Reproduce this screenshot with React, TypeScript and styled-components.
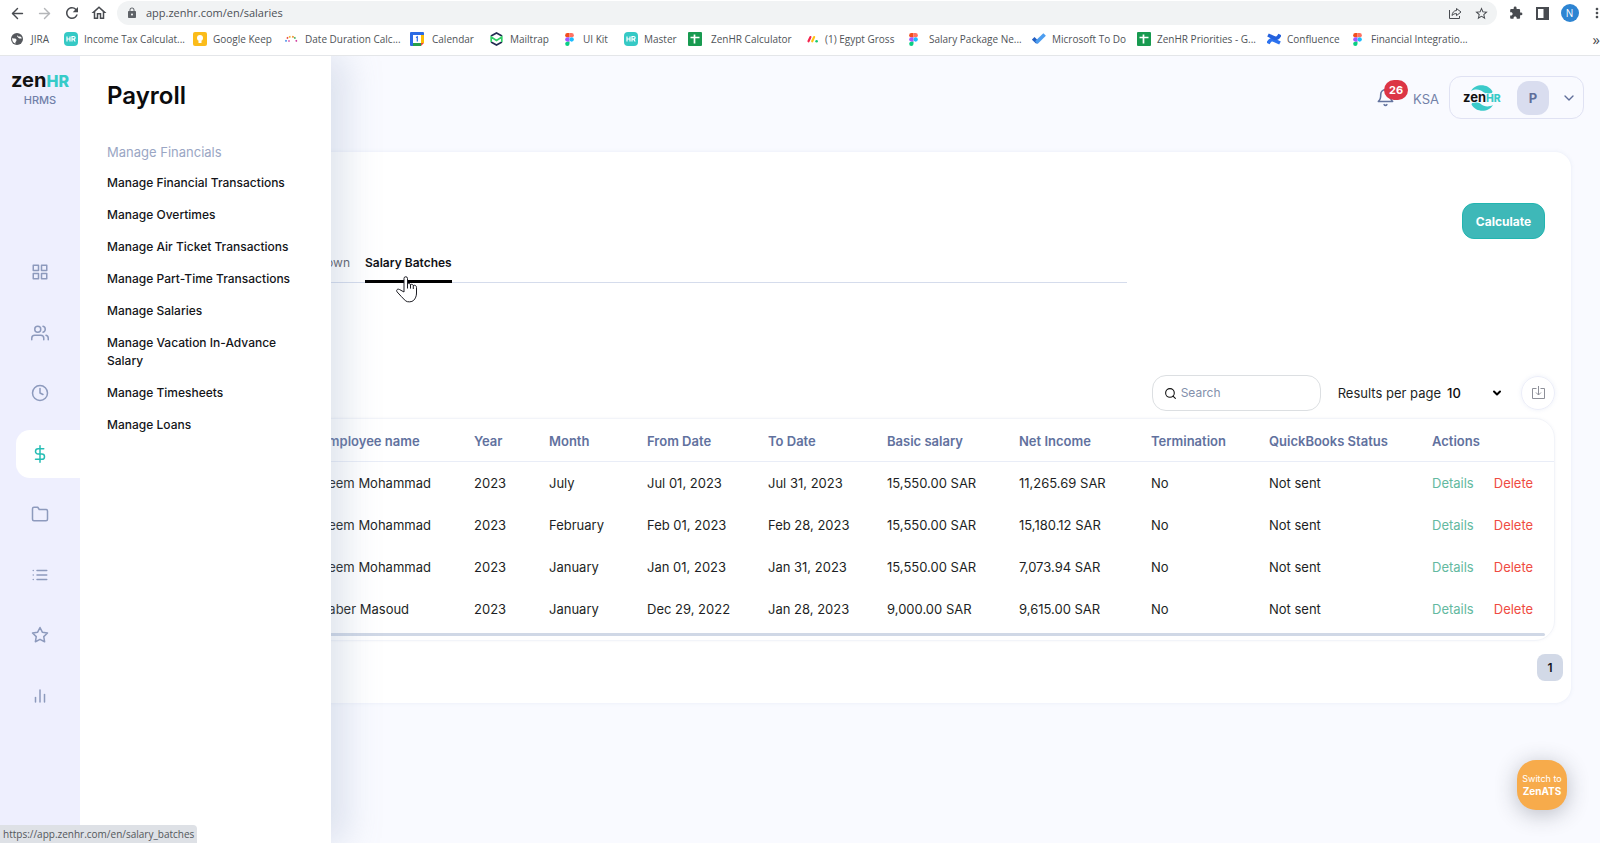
import React from "react";
import styled, { createGlobalStyle } from "styled-components";
import {
  FiArrowLeft, FiArrowRight, FiBarChart2, FiBell, FiChevronDown, FiClock,
  FiDollarSign, FiFolder, FiGrid, FiList, FiSearch, FiStar, FiUsers,
} from "react-icons/fi";
import {
  MdExtension, MdLock, MdMoreVert, MdRefresh, MdOutlineHome, MdStarBorder,
} from "react-icons/md";

const GlobalStyle = createGlobalStyle`
  * { box-sizing: border-box; }
  body {
    margin: 0;
    background: #f9faff;
    color: #1d1f24;
    font-family: Inter, "Liberation Sans", sans-serif;
    font-size: 13px;
  }
  button, input, select { font-family: inherit; }
  button { cursor: pointer; padding: 0; border: 0; background: none; }
  a { text-decoration: none; color: inherit; }
  svg { display: block; flex: none; }
`;

const Screen = styled.div`
  position: relative;
  display: flex;
  flex-direction: column;
  min-height: 100vh;
  overflow: hidden;
`;

/* ---------- browser chrome ---------- */

const Browser = styled.header`
  background: #fff;
  border-bottom: 1px solid #e4e6e9;
  color: #4f5358;
  font-family: "Open Sans", "Noto Sans", sans-serif;
`;

const AddressRow = styled.div`
  display: flex;
  align-items: center;
  height: 26px;
  margin-right: -10px;
  padding-left: 4px;
`;

const ChromeButton = styled.button<{ $muted?: boolean }>`
  display: grid;
  place-items: center;
  width: 27px;
  height: 24px;
  flex: none;
  color: ${(p) => (p.$muted ? "#b4b6b9" : "#484b50")};
  font-size: 18px;
`;

const AddressBar = styled.div`
  display: flex;
  align-items: center;
  flex: 1;
  height: 24px;
  margin: 0 5px;
  padding: 0 2px 0 9px;
  border-radius: 12px;
  background: #f1f3f4;
`;

const AddressInput = styled.input`
  flex: 1;
  min-width: 0;
  border: 0;
  padding: 0 0 1px 8px;
  background: none;
  color: #4c5056;
  font-size: 11px;
`;

const ProfileDot = styled.span`
  display: grid;
  place-items: center;
  width: 18px;
  height: 18px;
  border-radius: 50%;
  background: #2d84d2;
  color: #fff;
  font-size: 10px;
`;

const BookmarkBar = styled.nav`
  display: flex;
  align-items: center;
  height: 29px;
  padding: 0 0 3px 10px;
`;

const Bookmark = styled.a<{ $width: number; $gap: number }>`
  display: flex;
  align-items: center;
  flex: none;
  gap: ${(p) => p.$gap}px;
  width: ${(p) => p.$width}px;
  font-size: 10px;
  line-height: 16px;
  white-space: nowrap;
`;

const MoreBookmarks = styled.button`
  margin-left: auto;
  color: #484b50;
  font-size: 15px;
  line-height: 16px;
`;

const Badge = ({ kind }: { kind: string }) => {
  switch (kind) {
    case "globe":
      return (
        <svg width="14" height="14" viewBox="0 0 14 14">
          <circle cx="7" cy="7" r="6" fill="#55585d" />
          <path d="M2.200 6c2 .8 4.300.2 4.300 2S5 9.500 5.500 11.800C3 10.800 1.800 8.500 2.200 6zM7.500 3c-.2 1.300 1 1.600 2.300 1.500s1.500.8 2 2c-1.500-.2-2.800.2-3.500-.8S6.300 4.500 7.500 3z" fill="#fff" />
        </svg>
      );
    case "hr":
      return (
        <svg width="14" height="14" viewBox="0 0 14 14">
          <rect width="14" height="14" rx="4" fill="#35c9c5" />
          <path d="M3 4.500v5M6 4.500v5M3 7h3M8 9.500v-5h1.800a1.300 1.300 0 0 1 0 2.700H8M9.700 7.200l1.500 2.300" stroke="#fff" strokeWidth="1.200" fill="none" />
        </svg>
      );
    case "keep":
      return (
        <svg width="14" height="14" viewBox="0 0 14 14">
          <rect width="14" height="14" rx="2" fill="#fbbc1a" />
          <circle cx="7" cy="6" r="3" fill="#fff" />
          <path d="M5.500 8.500h3V11h-3z" fill="#fff" />
        </svg>
      );
    case "dots":
      return (
        <svg width="14" height="14" viewBox="0 0 14 14" strokeWidth="1.600">
          <path d="M1.500 9.500l1-1.300" stroke="#3584e4" />
          <path d="M2.800 5.500l1.400.9" stroke="#e8453c" />
          <path d="M5.500 4l.6 1.600" stroke="#f5b82e" />
          <path d="M9.200 4l-.6 1.600" stroke="#f08a24" />
          <path d="M11.500 5.500l-1.300.9" stroke="#35a853" />
          <path d="M4.300 9h1.400M12.800 9.500l-1-1.300" stroke="#d0359b" />
        </svg>
      );
    case "calendar":
      return (
        <svg width="14" height="14" viewBox="0 0 14 14">
          <path d="M0 1a1 1 0 0 1 1-1h12a1 1 0 0 1 1 1v2H3v11H1a1 1 0 0 1-1-1z" fill="#2b6be4" />
          <path d="M11 3h3v8h-3z" fill="#fbbc04" />
          <path d="M3 11h8v3H3z" fill="#25a04a" />
          <path d="M11 11h3l-3 3z" fill="#e8453c" />
          <path d="M3 3h8v8H3z" fill="#fff" />
          <path d="M6 5.500l1.300-.7V9.500" stroke="#2b6be4" strokeWidth="1.200" fill="none" />
        </svg>
      );
    case "mailtrap":
      return (
        <svg width="13" height="14" viewBox="0 0 13 14" fill="none" strokeWidth="1.700">
          <path d="M1 4L6.500 1 12 4" stroke="#232c52" />
          <path d="M1 10l5.500 3L12 10" stroke="#232c52" />
          <path d="M1.200 10V5l5.300 3.500L11.800 5v5" stroke="#31d067" />
        </svg>
      );
    case "figma":
      return (
        <svg width="9" height="13" viewBox="0 0 10 15">
          <path d="M2.500 0H5v5H2.500a2.500 2.500 0 0 1 0-5z" fill="#f24e1e" />
          <path d="M5 0h2.500a2.500 2.500 0 0 1 0 5H5z" fill="#ff7262" />
          <path d="M2.500 5H5v5H2.500a2.500 2.500 0 0 1 0-5z" fill="#a259ff" />
          <circle cx="7.500" cy="7.500" r="2.500" fill="#1abcfe" />
          <path d="M2.500 10H5v2.500A2.500 2.500 0 1 1 2.500 10z" fill="#0acf83" />
        </svg>
      );
    case "sheet":
      return (
        <svg width="14" height="14" viewBox="0 0 14 14">
          <rect width="14" height="14" rx="1" fill="#189a50" />
          <path d="M6.500 2.500v9M2.500 5.500h9" stroke="#fff" strokeWidth="1.700" />
        </svg>
      );
    case "monday":
      return (
        <svg width="11" height="8" viewBox="0 0 11 8" strokeLinecap="round" strokeWidth="2.200">
          <path d="M1.500 6.300l1.900-4.200" stroke="#f4254e" />
          <path d="M5.200 6.300l1.900-4.200" stroke="#ffc414" />
          <circle cx="9.600" cy="6.300" r="1.300" fill="#15c972" />
        </svg>
      );
    case "todo":
      return (
        <svg width="14" height="12" viewBox="0 0 14 12" fill="none" strokeWidth="3.600">
          <path d="M1.200 5.300l4.300 4.300" stroke="#235fc2" />
          <path d="M4.300 9.600L12.600 1.500" stroke="#4c9df0" />
        </svg>
      );
    default:
      return (
        <svg width="14" height="14" viewBox="0 0 14 14" fill="none" strokeWidth="3.600">
          <path d="M1 11.500c2-4 4-4.500 6.500-3.200L13 11" stroke="#2c72ef" />
          <path d="M13 2.500c-2 4-4 4.500-6.500 3.200L1 3" stroke="#2461dd" />
        </svg>
      );
  }
};

const bookmarks = [
  { icon: "globe", label: "JIRA", width: 54, gap: 7 },
  { icon: "hr", label: "Income Tax Calculat...", width: 129, gap: 6 },
  { icon: "keep", label: "Google Keep", width: 91, gap: 6 },
  { icon: "dots", label: "Date Duration Calc...", width: 126, gap: 7 },
  { icon: "calendar", label: "Calendar", width: 80, gap: 8 },
  { icon: "mailtrap", label: "Mailtrap", width: 75, gap: 7 },
  { icon: "figma", label: "UI Kit", width: 59, gap: 9 },
  { icon: "hr", label: "Master", width: 64, gap: 6 },
  { icon: "sheet", label: "ZenHR Calculator", width: 119, gap: 9 },
  { icon: "monday", label: "(1) Egypt Gross", width: 102, gap: 7 },
  { icon: "figma", label: "Salary Package Ne...", width: 123, gap: 11 },
  { icon: "todo", label: "Microsoft To Do", width: 105, gap: 6 },
  { icon: "sheet", label: "ZenHR Priorities - G...", width: 130, gap: 6 },
  { icon: "confluence", label: "Confluence", width: 86, gap: 6 },
  { icon: "figma", label: "Financial Integratio...", width: 120, gap: 9 },
];

/* ---------- application shell ---------- */

const Shell = styled.div`
  position: relative;
  display: flex;
  flex: 1;
`;

const Sidebar = styled.aside`
  display: flex;
  flex-direction: column;
  align-items: center;
  width: 80px;
  flex: none;
  padding-top: 14px;
  background: #eeeffe;
`;

const Wordmark = styled.span<{ $size: number }>`
  display: flex;
  align-items: baseline;
  color: #111;
  font-size: ${(p) => p.$size}px;
  font-weight: 700;
  line-height: 1;
`;

const WordmarkAccent = styled.span`
  color: #36cbc8;
  font-size: 0.8em;
  font-weight: 800;
`;

const Product = styled.span`
  margin-top: 2px;
  color: #7180a9;
  font-size: 11px;
  font-weight: 500;
  line-height: 16px;
`;

const SideNav = styled.nav`
  display: flex;
  flex-direction: column;
  justify-content: space-between;
  width: 100%;
  height: 472px;
  margin-top: 140px;
  padding-left: 16px;
`;

const SideLink = styled.a<{ $active?: boolean }>`
  display: flex;
  align-items: center;
  height: 48px;
  padding-left: 15px;
  border-radius: 14px 0 0 14px;
  color: ${(p) => (p.$active ? "#25bdb4" : "#8d9abd")};
  background: ${(p) => (p.$active ? "#fff" : "transparent")};
  font-size: 18px;
`;

const Drawer = styled.section`
  position: absolute;
  top: 0;
  bottom: 0;
  left: 80px;
  width: 251px;
  padding: 26px 27px;
  background: #fff;
  box-shadow: 16px 0 32px rgba(140, 160, 190, 0.26);
  clip-path: inset(0 -80px 0 0);
`;

const DrawerTitle = styled.h1`
  margin: 0;
  color: #0b0b0d;
  font-size: 24px;
  font-weight: 600;
  line-height: 28px;
`;

const DrawerGroup = styled.h2`
  margin: 32px 0 12px;
  color: #9aa6c4;
  font-size: 13px;
  font-weight: 400;
  line-height: 20px;
`;

const DrawerList = styled.ul`
  display: flex;
  flex-direction: column;
  gap: 14px;
  margin: 0;
  padding: 0;
  list-style: none;
  color: #141519;
  font-size: 12px;
  font-weight: 500;
  line-height: 18px;
`;

const Main = styled.main`
  flex: 1;
  min-width: 0;
  padding: 0 29px 0 28px;
`;

const TopBar = styled.div`
  display: flex;
  align-items: center;
  justify-content: flex-end;
  height: 96px;
  margin-right: -13px;
  padding-bottom: 13px;
`;

const Alerts = styled.button`
  position: relative;
  color: #64749f;
  font-size: 19px;
`;

const AlertCount = styled.span`
  position: absolute;
  left: 8px;
  bottom: 7px;
  min-width: 24px;
  border-radius: 10px;
  background: #dc3545;
  color: #fff;
  font-size: 11px;
  font-weight: 700;
  line-height: 20px;
  text-align: center;
`;

const Country = styled.span`
  margin: 3px 10px 0 18px;
  color: #7381a8;
  font-size: 13px;
  line-height: 20px;
`;

const Account = styled.button`
  display: flex;
  align-items: center;
  width: 135px;
  height: 43px;
  padding: 0 6px 0 13px;
  border: 1px solid #e0e2f3;
  border-radius: 12px;
  color: #5f6e9a;
`;

const CompanyLogo = styled.span`
  position: relative;
  display: grid;
  place-items: center;
  width: 37px;
  height: 30px;
  margin-right: 17px;
`;

const LogoArcs = styled.svg`
  position: absolute;
  inset: 0;
  margin: auto;
`;

const LogoText = styled.span`
  position: relative;
`;

const Avatar = styled.span`
  width: 34px;
  margin-right: 12px;
  border-radius: 12px;
  background: #d9ddef;
  font-size: 13px;
  font-weight: 700;
  line-height: 34px;
`;

/* ---------- salaries card ---------- */

const Card = styled.section`
  padding: 51px 16px 22px;
  border-radius: 16px;
  background: #fff;
  box-shadow: 0 0 4px rgba(110, 130, 180, 0.12);
`;

const CalculateButton = styled.button`
  display: block;
  width: 83px;
  height: 36px;
  margin: 0 10px 0 auto;
  border: 1px solid #22b5b0;
  border-radius: 12px;
  background: #3eb8b8;
  color: #fff;
  font-size: 12px;
  font-weight: 700;
`;

const Tabs = styled.div`
  display: flex;
  gap: 15px;
  margin: 11px 428px 0 0;
  border-bottom: 1px solid #d5dcec;
`;

const Tab = styled.button<{ $active?: boolean }>`
  width: ${(p) => (p.$active ? "auto" : "226px")};
  height: 33px;
  margin-bottom: -1px;
  padding-bottom: 5px;
  border-bottom: 3px solid ${(p) => (p.$active ? "#000" : "transparent")};
  color: ${(p) => (p.$active ? "#111216" : "#5c6069")};
  font-size: 12px;
  font-weight: ${(p) => (p.$active ? 600 : 400)};
  line-height: 18px;
  text-align: right;
`;

const Toolbar = styled.div`
  display: flex;
  align-items: center;
  justify-content: flex-end;
  margin: 92px 0 7px;
`;

const SearchBox = styled.label`
  display: flex;
  align-items: center;
  gap: 4px;
  width: 169px;
  height: 36px;
  margin-right: 17px;
  padding: 0 11px;
  border: 1px solid #dcdfe2;
  border-radius: 14px;
  color: #111;
`;

const SearchInput = styled.input`
  width: 100%;
  min-width: 0;
  padding: 0;
  border: 0;
  outline: 0;
  background: none;
  font-size: 12px;
  line-height: 18px;
  &::placeholder { color: #8390ab; opacity: 1; }
`;

const PerPage = styled.label`
  display: flex;
  align-items: center;
  gap: 6px;
  font-size: 13px;
  line-height: 18px;
`;

const SelectBox = styled.span`
  display: grid;
  grid-template-columns: 44px 12px;
  align-items: center;
`;

const Select = styled.select`
  grid-area: 1 / 1 / 2 / 3;
  width: 56px;
  padding: 0;
  border: 0;
  appearance: none;
  background: none;
  color: #0b0b0d;
  font-size: 13px;
  font-weight: 500;
`;

const SelectArrow = styled.span`
  grid-area: 1 / 2;
  justify-self: center;
  pointer-events: none;
  color: #000;
`;

const ExportButton = styled.button`
  display: grid;
  place-items: center;
  width: 34px;
  height: 34px;
  margin-left: 18px;
  border: 1px solid #eceef9;
  border-radius: 50%;
  box-shadow: 0 0 4px rgba(110, 130, 200, 0.12);
`;

const TableFrame = styled.div`
  overflow: hidden;
  border: 1px solid #f2f4f9;
  border-radius: 20px;
  box-shadow: 0 0 3px rgba(110, 130, 180, 0.08);
`;

const Table = styled.table`
  width: 100%;
  table-layout: fixed;
  border-collapse: collapse;
  font-size: 13px;
  line-height: 18px;
`;

const HeadCell = styled.th<{ $width?: number }>`
  width: ${(p) => (p.$width ? `${p.$width}px` : "auto")};
  height: 42px;
  padding: 2px 0 0;
  border-bottom: 1px solid #e9edf7;
  color: #61719e;
  font-size: 13px;
  font-weight: 600;
  text-align: left;
  white-space: nowrap;
  &:first-child { padding-left: 195px; }
`;

const Cell = styled.td`
  height: 42px;
  padding: 1px 0 0;
  white-space: nowrap;
  &:first-child { padding-left: 195px; }
`;

const ActionLink = styled.a<{ $danger?: boolean }>`
  margin-right: 20px;
  color: ${(p) => (p.$danger ? "#ef4b42" : "#63b9a0")};
`;

const ScrollThumb = styled.div`
  height: 3px;
  margin: 4px 9px 4px 0;
  border-radius: 2px;
  background: #d0d8e6;
`;

const PageButton = styled.button`
  display: block;
  width: 26px;
  height: 27px;
  margin: 13px -8px 0 auto;
  border-radius: 8px;
  background: #d2d9e7;
  color: #15171c;
  font-size: 12px;
  font-weight: 600;
`;

/* ---------- floating pieces ---------- */

const SwitchButton = styled.button`
  position: absolute;
  right: 33px;
  bottom: 33px;
  width: 50px;
  height: 50px;
  border-radius: 19px;
  background: #f7ab4b;
  box-shadow: 0 4px 22px rgba(40, 45, 60, 0.3);
  color: #fff;
  font-size: 9px;
  line-height: 13px;
  white-space: nowrap;
`;

const SwitchTarget = styled.strong`
  display: block;
  font-size: 10px;
`;

const StatusBubble = styled.div`
  position: absolute;
  left: 0;
  bottom: 0;
  padding: 1px 3px 0;
  border-radius: 0 4px 0 0;
  background: #dee1e6;
  color: #53565b;
  font-family: "Open Sans", "Noto Sans", sans-serif;
  font-size: 10px;
  line-height: 17px;
  white-space: nowrap;
`;

const Pointer = styled.svg`
  position: absolute;
  top: 276px;
  left: 396px;
`;

const navItems = [
  { label: "Dashboard", Icon: FiGrid },
  { label: "Employees", Icon: FiUsers },
  { label: "Attendance", Icon: FiClock },
  { label: "Payroll", Icon: FiDollarSign },
  { label: "Documents", Icon: FiFolder },
  { label: "Lists", Icon: FiList },
  { label: "Performance", Icon: FiStar },
  { label: "Reports", Icon: FiBarChart2 },
];

const drawerLinks = [
  "Manage Financial Transactions",
  "Manage Overtimes",
  "Manage Air Ticket Transactions",
  "Manage Part-Time Transactions",
  "Manage Salaries",
  "Manage Vacation In-Advance Salary",
  "Manage Timesheets",
  "Manage Loans",
];

const columns: { title: string; width?: number }[] = [
  { title: "Employee name" },
  { title: "Year", width: 75 },
  { title: "Month", width: 98 },
  { title: "From Date", width: 121 },
  { title: "To Date", width: 119 },
  { title: "Basic salary", width: 132 },
  { title: "Net Income", width: 132 },
  { title: "Termination", width: 118 },
  { title: "QuickBooks Status", width: 163 },
  { title: "Actions", width: 122 },
];

const rows = [
  ["Reem Mohammad", "2023", "July", "Jul 01, 2023", "Jul 31, 2023", "15,550.00 SAR", "11,265.69 SAR", "No", "Not sent"],
  ["Reem Mohammad", "2023", "February", "Feb 01, 2023", "Feb 28, 2023", "15,550.00 SAR", "15,180.12 SAR", "No", "Not sent"],
  ["Reem Mohammad", "2023", "January", "Jan 01, 2023", "Jan 31, 2023", "15,550.00 SAR", "7,073.94 SAR", "No", "Not sent"],
  ["Saber Masoud", "2023", "January", "Dec 29, 2022", "Jan 28, 2023", "9,000.00 SAR", "9,615.00 SAR", "No", "Not sent"],
];

const BrowserChrome = () => (
  <Browser>
    <AddressRow>
      <ChromeButton aria-label="Back"><FiArrowLeft size={17} /></ChromeButton>
      <ChromeButton aria-label="Forward" $muted><FiArrowRight size={17} /></ChromeButton>
      <ChromeButton aria-label="Reload"><MdRefresh size={18} /></ChromeButton>
      <ChromeButton aria-label="Home"><MdOutlineHome size={18} /></ChromeButton>
      <AddressBar>
        <MdLock size={12} color="#5f6368" />
        <AddressInput aria-label="Address" defaultValue="app.zenhr.com/en/salaries" />
        <ChromeButton aria-label="Share">
          <svg width="14" height="14" viewBox="0 0 14 14" fill="none" stroke="currentColor">
            <path d="M1.500 4v8.500h10V10M8.500 2.500v2C6 4.500 4.300 6.500 4 9.500 5.300 8 6.500 7.600 8.500 7.600v2L13 6z" />
          </svg>
        </ChromeButton>
        <ChromeButton aria-label="Bookmark this page"><MdStarBorder size={15} /></ChromeButton>
      </AddressBar>
      <ChromeButton aria-label="Extensions"><MdExtension size={14} /></ChromeButton>
      <ChromeButton aria-label="Side panel">
        <svg width="13" height="13" viewBox="0 0 13 13" fill="none" stroke="currentColor" strokeWidth="2">
          <path d="M1 1h11v11H1z" />
          <path d="M9.500 1v11" strokeWidth="4" />
        </svg>
      </ChromeButton>
      <ChromeButton aria-label="Profile"><ProfileDot>N</ProfileDot></ChromeButton>
      <ChromeButton aria-label="Menu"><MdMoreVert size={16} /></ChromeButton>
    </AddressRow>
    <BookmarkBar aria-label="Bookmarks">
      {bookmarks.map((b) => (
        <Bookmark key={b.label} href="#" $width={b.width} $gap={b.gap}>
          <Badge kind={b.icon} />
          {b.label}
        </Bookmark>
      ))}
      <MoreBookmarks aria-label="More bookmarks">»</MoreBookmarks>
    </BookmarkBar>
  </Browser>
);

const App = () => (
  <Screen>
    <GlobalStyle />
    <BrowserChrome />
    <Shell>
      <Sidebar>
        <Wordmark $size={20}>zen<WordmarkAccent>HR</WordmarkAccent></Wordmark>
        <Product>HRMS</Product>
        <SideNav aria-label="Modules">
          {navItems.map(({ label, Icon }) => (
            <SideLink key={label} href="#" aria-label={label} $active={label === "Payroll"}>
              <Icon />
            </SideLink>
          ))}
        </SideNav>
      </Sidebar>

      <Main>
        <TopBar>
          <Alerts aria-label="Notifications"><FiBell strokeWidth={2} /><AlertCount>26</AlertCount></Alerts>
          <Country>KSA</Country>
          <Account aria-label="Account menu">
            <CompanyLogo>
              <LogoArcs width="22" height="26" viewBox="0 0 22 26" fill="#3bcaca">
                <path d="M0 6C4-1.500 17-2 21.500 6.500L21 8c-3 .6-6 .8-8.500-.7C9 4.500 5 3.500 0 6z" />
                <path d="M22 20c-4 7.500-17 8-21.500-.5L1 18c3-.6 6-.8 8.500.7 3.500 2.800 7.500 3.800 12.500 1.300z" />
              </LogoArcs>
              <LogoText><Wordmark $size={13}>zen<WordmarkAccent>HR</WordmarkAccent></Wordmark></LogoText>
            </CompanyLogo>
            <Avatar>P</Avatar>
            <FiChevronDown size={16} />
          </Account>
        </TopBar>

        <Card>
          <CalculateButton>Calculate</CalculateButton>
          <Tabs role="tablist">
            <Tab role="tab">Salary Breakdown</Tab>
            <Tab role="tab" aria-selected $active>Salary Batches</Tab>
          </Tabs>

          <Toolbar>
            <SearchBox>
              <FiSearch size={13} />
              <SearchInput type="search" placeholder="Search" aria-label="Search" />
            </SearchBox>
            <PerPage>
              Results per page
              <SelectBox>
                <Select defaultValue="10"><option>10</option><option>25</option></Select>
                <SelectArrow><FiChevronDown size={12} strokeWidth={4} /></SelectArrow>
              </SelectBox>
            </PerPage>
            <ExportButton aria-label="Export">
              <svg width="13" height="14" viewBox="0 0 13 14" fill="none" stroke="#8d8f98">
                <path d="M4.500 2.500h-4v10h12v-10h-4M6.500 0v9M4 6.500L6.500 9 9 6.500" />
              </svg>
            </ExportButton>
          </Toolbar>

          <TableFrame>
            <Table>
              <thead>
                <tr>{columns.map((c) => <HeadCell key={c.title} $width={c.width}>{c.title}</HeadCell>)}</tr>
              </thead>
              <tbody>
                {rows.map((row) => (
                  <tr key={row[3]}>
                    {row.map((value, i) => <Cell key={i}>{value}</Cell>)}
                    <Cell>
                      <ActionLink href="#">Details</ActionLink>
                      <ActionLink href="#" $danger>Delete</ActionLink>
                    </Cell>
                  </tr>
                ))}
              </tbody>
            </Table>
            <ScrollThumb />
          </TableFrame>
          <PageButton aria-label="Page 1">1</PageButton>
        </Card>
      </Main>

      <Drawer>
        <DrawerTitle>Payroll</DrawerTitle>
        <DrawerGroup>Manage Financials</DrawerGroup>
        <DrawerList>
          {drawerLinks.map((label) => <li key={label}><a href="#">{label}</a></li>)}
        </DrawerList>
      </Drawer>
    </Shell>

    <SwitchButton>Switch to<SwitchTarget>ZenATS</SwitchTarget></SwitchButton>
    <StatusBubble>https://app.zenhr.com/en/salary_batches</StatusBubble>
    <Pointer width="22" height="27" viewBox="0 0 22 27" fill="#fff" stroke="#1b1b22" strokeLinejoin="round">
      <path d="M8 14V2.500a1.600 1.600 0 0 1 3.500 0V8c1-.8 2.500-.6 3 .6 1-.6 2.300-.3 2.800.9 1.500-.6 3.200 0 3.200 2V17c0 3-1 5.500-3 7.500-1.500 1.500-6 2-8 .3C6.500 22 4 19 1.200 16c-1.500-2 .3-3.500 2.300-2.500L8 16z" />
      <path d="M11.500 8v4.500M14.500 8.600v4M17.300 9.500v3.500" />
    </Pointer>
  </Screen>
);

export default App;
